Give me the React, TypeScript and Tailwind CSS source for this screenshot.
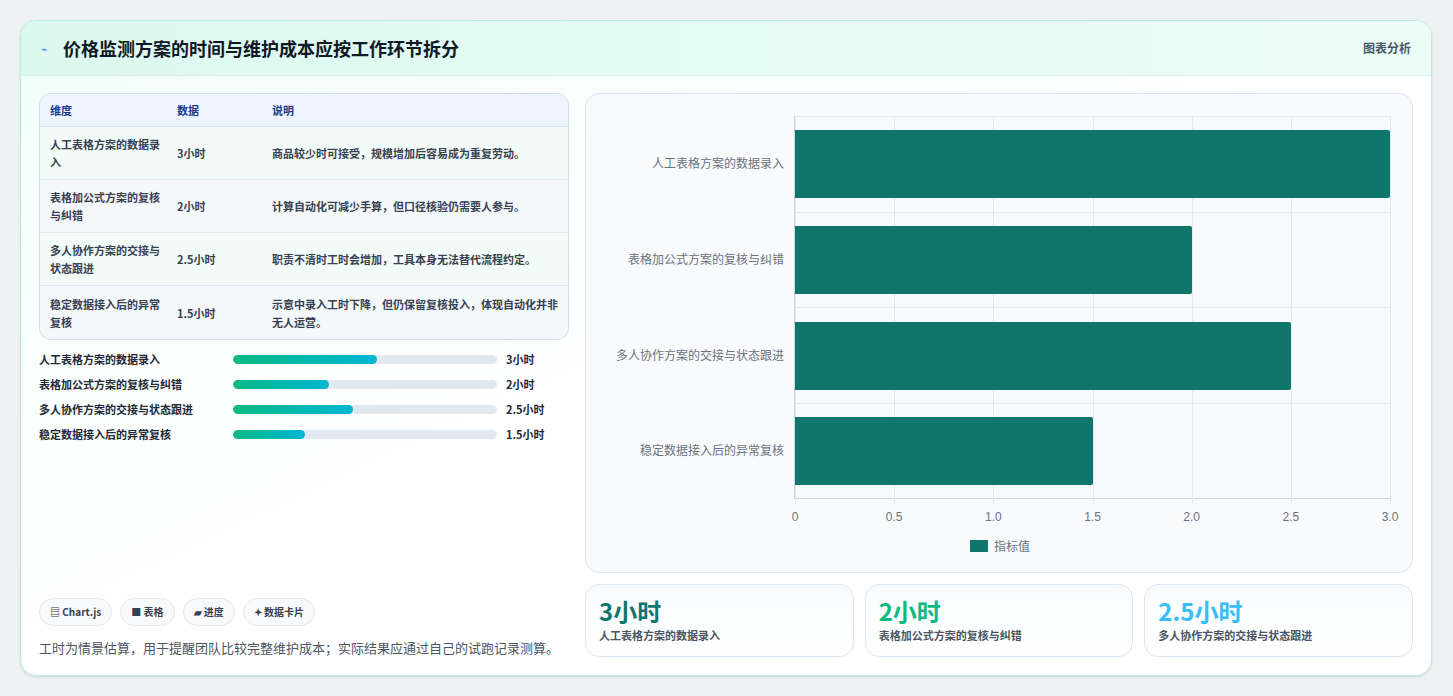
import React from "react";

const rows = [
  ["人工表格方案的数据录入", "3小时", "商品较少时可接受，规模增加后容易成为重复劳动。", 3],
  ["表格加公式方案的复核与纠错", "2小时", "计算自动化可减少手算，但口径核验仍需要人参与。", 2],
  ["多人协作方案的交接与状态跟进", "2.5小时", "职责不清时工时会增加，工具本身无法替代流程约定。", 2.5],
  ["稳定数据接入后的异常复核", "1.5小时", "示意中录入工时下降，但仍保留复核投入，体现自动化并非无人运营。", 1.5],
] as const;

const F = { fontFamily: '"Noto Sans CJK SC", "Noto Sans", sans-serif' };

export default function App() {
  const ticks = [0, 0.5, 1, 1.5, 2, 2.5, 3];
  return (
    <div style={F} className="w-[1453px] h-[696px] bg-[#eef2f3] p-[20px] pr-[21px]">
      <div className="h-[656px] rounded-[16px] border border-[#b9ece0] bg-gradient-to-br from-[#f2fdf9] via-white to-white overflow-hidden flex flex-col shadow-sm">
        <div className="h-[55px] shrink-0 flex items-center justify-between px-[20px] bg-gradient-to-r from-[#dcf9ef] to-[#ecfdf7] border-b border-[#d6f3ea]">
          <div className="flex items-center gap-[10px]">
            <span className="text-[#3b82f6] text-[11px] w-[12px]">⌁</span>
            <span className="text-[18px] font-bold text-[#111827]">价格监测方案的时间与维护成本应按工作环节拆分</span>
          </div>
          <span className="text-[12px] font-bold text-[#4b5563]">图表分析</span>
        </div>
        <div className="flex-1 flex gap-[16px] px-[18px] pt-[17px] pb-[18px]">
          <div className="w-[530px] flex flex-col">
            <div className="rounded-[12px] border border-[#cfdcea] overflow-hidden bg-[#f8fafc]">
              <div className="flex h-[33px] items-center bg-[#eef4fe] text-[11px] font-bold text-[#1e3a8a] border-b border-[#d5e0ee]">
                <div className="w-[137px] pl-[10px]">维度</div>
                <div className="w-[95px]">数据</div>
                <div>说明</div>
              </div>
              {rows.map((r, i) => (
                <div key={i} className={`flex h-[53px] items-center text-[11px] font-semibold text-[#374151] leading-[18px] ${i < 3 ? "border-b border-[#e2e8f0]" : ""} ${i % 2 ? "bg-[#f5f8fb]" : "bg-[#f3fbf8]"}`}>
                  <div className="w-[137px] pl-[10px] pr-[10px]">{r[0]}</div>
                  <div className="w-[95px]">{r[1]}</div>
                  <div className="flex-1 pr-[8px]">{r[2]}</div>
                </div>
              ))}
            </div>
            <div className="mt-[10px] flex flex-col gap-[7px]">
              {rows.map((r, i) => (
                <div key={i} className="flex items-center h-[18px] text-[11px] font-semibold text-[#1f2937]">
                  <div className="w-[194px]">{r[0]}</div>
                  <div className="w-[264px] h-[9px] rounded-full bg-[#e2e8f0] overflow-hidden">
                    <div className="h-full rounded-full bg-gradient-to-r from-[#10b981] to-[#06b6d4]" style={{ width: `${(r[3] / 5.5) * 100}%` }} />
                  </div>
                  <div className="ml-[9px] font-bold">{r[1]}</div>
                </div>
              ))}
            </div>
            <div className="flex-1" />
            <div className="flex gap-[8px] text-[10px] font-bold text-[#374151]">
              {["▤ Chart.js", "■ 表格", "▰ 进度", "✦ 数据卡片"].map((c) => (
                <span key={c} className="h-[28px] px-[10px] rounded-full border border-[#e5e7eb] bg-[#f9fafb] flex items-center">{c}</span>
              ))}
            </div>
            <div className="mt-[12px] text-[13px] text-[#4b5563]">工时为情景估算，用于提醒团队比较完整维护成本；实际结果应通过自己的试跑记录测算。</div>
          </div>
          <div className="flex-1 flex flex-col gap-[11px]">
            <div className="h-[480px] rounded-[14px] border border-[#dde6f0] bg-[#f8fafc] relative">
              <div className="absolute left-[208px] top-[22px] w-[596px] h-[383px] border-l border-b border-[#cbd5e1]">
                {ticks.map((t, i) => (
                  <div key={t} className="absolute top-0 bottom-[-6px] border-l border-[#e2e8f0]" style={{ left: `${(i / 6) * 100}%` }} />
                ))}
                {[0, 1, 2, 3].map((i) => (
                  <div key={i} className="absolute left-0 right-0 border-t border-[#e2e8f0]" style={{ top: `${i * 25}%` }} />
                ))}
                {rows.map((r, i) => (
                  <div key={i} className="absolute left-0 h-[68px] bg-[#0f766e] rounded-r-[2px]" style={{ top: `${i * 95.75 + 14}px`, width: `${(r[3] / 3) * 100}%` }} />
                ))}
                {rows.map((r, i) => (
                  <div key={i} className="absolute right-[606px] text-[12px] text-[#6b7280] whitespace-nowrap" style={{ top: `${i * 95.75 + 38}px` }}>{r[0]}</div>
                ))}
                {ticks.map((t, i) => (
                  <div key={t} className="absolute top-[392px] -translate-x-1/2 text-[12px] text-[#6b7280]" style={{ left: `${(i / 6) * 100}%`, fontFamily: '"Liberation Sans", sans-serif' }}>{t === 0 ? "0" : t.toFixed(1)}</div>
                ))}
              </div>
              <div className="absolute left-[384px] top-[443px] flex items-center gap-[6px] text-[12px] text-[#6b7280]">
                <span className="w-[18px] h-[12px] bg-[#0f766e]" />指标值
              </div>
            </div>
            <div className="flex gap-[11px] h-[73px]">
              {[["3小时", "text-[#0f766e]", "人工表格方案的数据录入"], ["2小时", "text-[#10b981]", "表格加公式方案的复核与纠错"], ["2.5小时", "text-[#38bdf8]", "多人协作方案的交接与状态跟进"]].map(([v, c, l]) => (
                <div key={v} className="flex-1 rounded-[14px] border border-[#dbe7f3] bg-gradient-to-b from-[#f8fbfd] to-white px-[13px] pt-[10px]">
                  <div className={`text-[24px] font-bold leading-[32px] ${c}`}>{v}</div>
                  <div className="text-[11px] font-semibold text-[#4b5563]">{l}</div>
                </div>
              ))}
            </div>
          </div>
        </div>
      </div>
    </div>
  );
}
